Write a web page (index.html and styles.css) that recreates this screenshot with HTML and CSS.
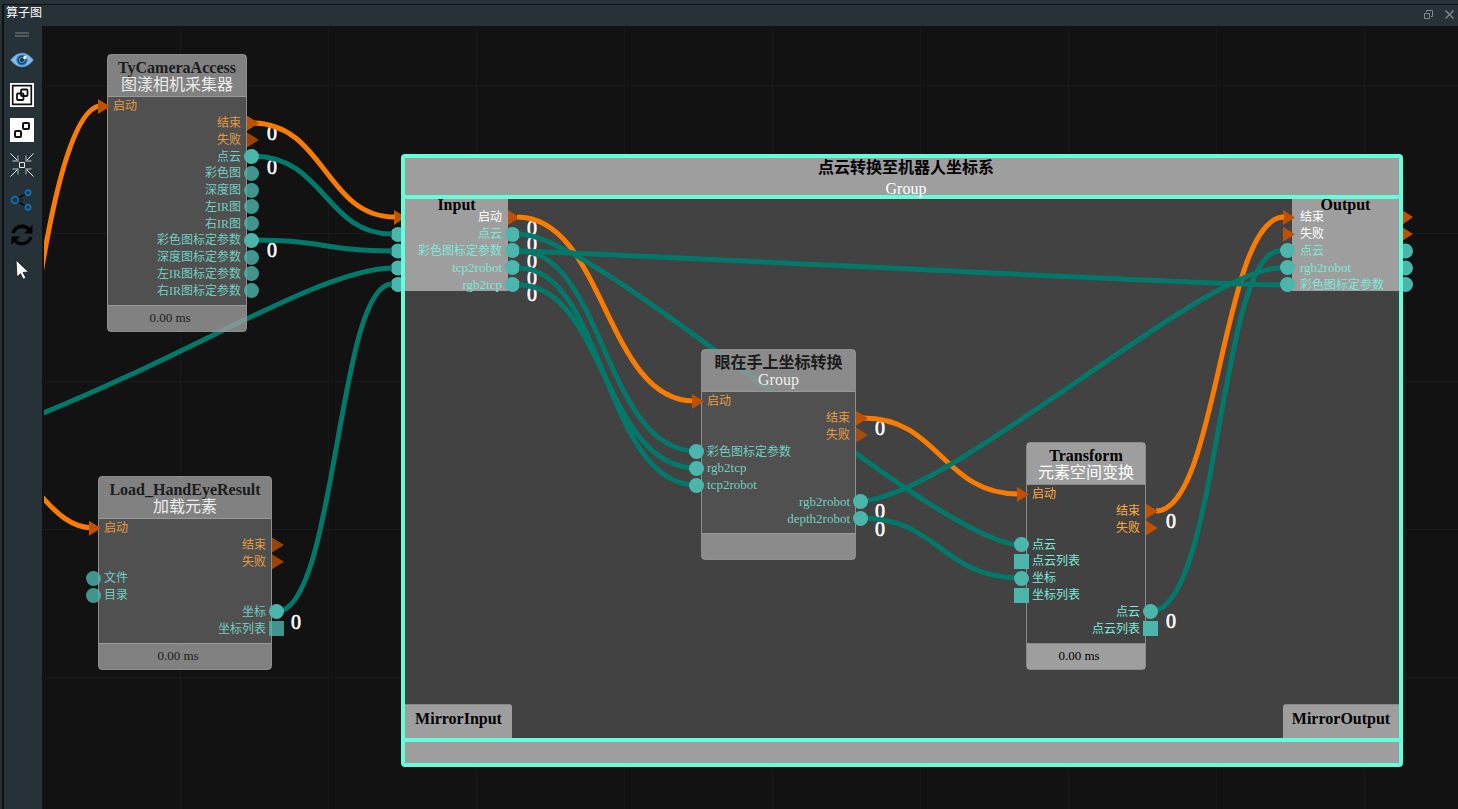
FILE: index.html
```html
<!DOCTYPE html>
<html lang="zh-CN">
<head>
<meta charset="utf-8">
<title>算子图</title>
<link rel="stylesheet" href="styles.css">
</head>
<body>
<div class="dock">
  <header class="titlebar">
    <h1 class="titlebar-text">算子图</h1>
    <div class="titlebar-actions">
      <button class="win-button" aria-label="浮动"><svg width="11" height="11" viewBox="0 0 11 11" fill="none" stroke="#838b8f"><path d="M3.500 3V1.500H9.500V7.500H8M1.500 4.500H6.500V9.500H1.500Z"/></svg></button>
      <button class="win-button" aria-label="关闭"><svg width="11" height="11" viewBox="0 0 11 11" stroke="#838b8f" stroke-width="1.300"><path d="M1.500 1.500L9.500 9.500M9.500 1.500L1.500 9.500"/></svg></button>
    </div>
  </header>
  <div class="workspace">
    <nav class="toolbar" aria-label="工具栏">
      <div class="handle"></div>
      <button class="tool" aria-label="显示"><svg viewBox="0 0 24 24"><path d="M0.500 12Q6 5 12 5Q18 5 23.500 12Q18 19 12 19Q6 19 0.500 12Z" fill="#86b9e8" stroke="#4a7fae" stroke-width=".6"/><circle cx="12" cy="12" r="5.600" fill="#1c7fca"/><circle cx="12" cy="12" r="3.700" fill="#4a91c8" stroke="#17456d" stroke-width="1.200"/><circle cx="12" cy="12" r="2" fill="#17364f"/><circle cx="15" cy="9.500" r="1.700" fill="#fff"/></svg></button>
      <button class="tool" aria-label="组合"><svg viewBox="0 0 24 24"><path fill="#fff" d="M0 0H24V24H0Z"/><g fill="none" stroke="#111"><path stroke-width="1.700" d="M2.700 2.700H21.300V21.300H2.700Z"/><rect x="7" y="10.500" width="6.500" height="6.500" rx="1" stroke-width="1.800"/><rect x="11" y="6.500" width="6.500" height="6.500" rx="1" stroke-width="1.800"/></g></svg></button>
      <button class="tool" aria-label="拆分"><svg viewBox="0 0 24 24"><path fill="#fff" d="M0 0H24V24H0Z"/><g fill="none" stroke="#111" stroke-width="2"><rect x="5" y="13" width="6" height="6" rx="1"/><rect x="13" y="5" width="6" height="6" rx="1"/></g></svg></button>
      <button class="tool" aria-label="收缩"><svg viewBox="0 0 24 24" fill="none" stroke="#e8eaeb"><path stroke-width="1" d="M9.500 9.500H14.500V14.500H9.500ZM0.500 0.500L8 8M23.500 0.500L16 8M0.500 23.500L8 16M23.500 23.500L16 16"/><path stroke="#8e979b" stroke-width="1.300" d="M8 2.500V8H2.500M16 2.500V8H21.500M8 21.500V16H2.500M16 21.500V16H21.500"/></svg></button>
      <button class="tool" aria-label="连接"><svg viewBox="0 0 24 24" fill="none"><path stroke="#000" stroke-width="1.200" d="M8 10L16 6M8 14L16 18"/><path stroke="#000" stroke-dasharray="1.500 1" d="M9 12H14"/><g stroke="#0d73bd" stroke-width="1.700"><circle cx="5" cy="12" r="3.400"/><circle cx="18" cy="4.700" r="2.600"/><circle cx="18" cy="19.300" r="2.600"/></g></svg></button>
      <button class="tool" aria-label="刷新"><svg viewBox="0 0 24 24"><g fill="none" stroke="#000" stroke-width="3.400"><path d="M3 10Q5.500 3.500 12 3.300Q16.500 3.300 19 6.500"/><path d="M21 14Q18.500 20.500 12 20.700Q7.500 20.700 5 17.500"/></g><path d="M22.500 2V10.500H14ZM1.500 22V13.500H10Z"/></svg></button>
      <button class="tool" aria-label="选择"><svg viewBox="0 0 24 24"><path d="M6 2L18.500 14L13 14.400L16 20L13.200 21.300L10.500 15.700L7 19Z" fill="#fff" stroke="#111" stroke-width=".8"/></svg></button>
    </nav>

    <main class="canvas">
      <svg class="layer" aria-hidden="true">
        <g transform="translate(-44 -28)">
          <g fill="#bf5000"><path d="M394 210L406 217L394 225ZM1402 210L1413 217L1402 225ZM1402 227L1413 234L1402 241Z"/></g>
          <g fill="#4db6ac">
            <circle cx="398" cy="234.500" r="7.500"/><circle cx="398" cy="251" r="7.500"/><circle cx="398" cy="268" r="7.500"/><circle cx="398" cy="284.500" r="7.500"/>
            <circle cx="1405.500" cy="251" r="7.500"/><circle cx="1405.500" cy="268" r="7.500"/><circle cx="1405.500" cy="284.500" r="7.500"/>
          </g>
        </g>
      </svg>

      <section class="group">
        <header class="group-head"><h2 class="title">点云转换至机器人坐标系</h2><p class="subtitle">Group</p></header>
        <div class="group-body">
          <div class="panel-row">
            <div class="panel panel-in">
              <h3 class="title">Input</h3>
              <ul class="rows rows-5">
                <li class="out flow">启动<i class="port arrow"></i></li>
                <li class="out">点云<i class="port"></i></li>
                <li class="out">彩色图标定参数<i class="port"></i></li>
                <li class="out latin">tcp2robot<i class="port"></i></li>
                <li class="out latin">rgb2tcp<i class="port"></i></li>
              </ul>
            </div>
            <div class="panel panel-out">
              <h3 class="title">Output</h3>
              <ul class="rows rows-5">
                <li class="in flow"><i class="port arrow"></i>结束</li>
                <li class="in flow"><i class="port arrow"></i>失败</li>
                <li class="in"><i class="port"></i>点云</li>
                <li class="in latin"><i class="port"></i>rgb2robot</li>
                <li class="in"><i class="port"></i>彩色图标定参数</li>
              </ul>
            </div>
          </div>
          <div class="panel-row">
            <div class="mirror mirror-in"><h3 class="title">MirrorInput</h3></div>
            <div class="mirror mirror-out"><h3 class="title">MirrorOutput</h3></div>
          </div>
        </div>
        <footer class="group-foot"></footer>
      </section>

      <svg class="layer">
        <g transform="translate(-44 -28)">
          <g class="counts">
            <text x="272" y="140">0</text><text x="272" y="174">0</text><text x="272" y="257">0</text>
            <text x="296" y="629">0</text>
            <text x="532" y="235">0</text><text x="532" y="251">0</text><text x="532" y="268">0</text><text x="532" y="285">0</text><text x="532" y="301">0</text>
            <text x="880" y="435">0</text><text x="880" y="518">0</text><text x="880" y="536">0</text>
            <text x="1171" y="528">0</text><text x="1171" y="628">0</text>
          </g>
          <g class="wire wire-flow">
            <path d="M40 280C56 180 76 108 100 106"/>
            <path d="M36 490C58 516 72 527 92 528"/>
            <path d="M252 123C325 123 325 217 395 217"/>
            <path d="M517 217C605 217 605 401 694 401"/>
            <path d="M863 418C940 418 942 494 1019 494"/>
            <path d="M1156 511C1218 511 1222 217 1284 217"/>
          </g>
          <g class="wire wire-data">
            <path d="M252 156C325 156 325 234 392 234"/>
            <path d="M252 240C325 240 325 251 392 251"/>
            <path d="M36 416C200 350 320 270 392 268"/>
            <path d="M276 612C337 612 337 284 392 284"/>
            <path d="M519 234C600 234 936 545 1021 545"/>
            <path d="M519 251C604 253 1200 285 1280 285"/>
            <path d="M519 251C604 251 604 451 696 451"/>
            <path d="M519 268C604 268 604 485 696 485"/>
            <path d="M519 285C604 285 604 468 696 468"/>
            <path d="M860 501C945 501 1202 268 1280 268"/>
            <path d="M860 518C940 518 940 578 1021 578"/>
            <path d="M1151 611C1219 611 1219 251 1280 251"/>
          </g>
        </g>
      </svg>

      <article class="node dim node-camera">
        <header class="node-head"><h2 class="title">TyCameraAccess</h2><p class="subtitle">图漾相机采集器</p></header>
        <div class="node-body"><ul class="rows rows-12">
          <li class="in flow"><i class="port arrow"></i>启动</li>
          <li class="out flow">结束<i class="port arrow"></i></li>
          <li class="out flow">失败<i class="port arrow idle"></i></li>
          <li class="out">点云<i class="port"></i></li>
          <li class="out">彩色图<i class="port idle"></i></li>
          <li class="out">深度图<i class="port idle"></i></li>
          <li class="out">左IR图<i class="port idle"></i></li>
          <li class="out">右IR图<i class="port idle"></i></li>
          <li class="out">彩色图标定参数<i class="port"></i></li>
          <li class="out">深度图标定参数<i class="port idle"></i></li>
          <li class="out">左IR图标定参数<i class="port idle"></i></li>
          <li class="out">右IR图标定参数<i class="port idle"></i></li>
        </ul></div>
        <footer class="node-foot">0.00 ms</footer>
      </article>

      <article class="node dim node-load">
        <header class="node-head"><h2 class="title">Load_HandEyeResult</h2><p class="subtitle">加载元素</p></header>
        <div class="node-body"><ul class="rows rows-7">
          <li class="in flow"><i class="port arrow"></i>启动</li>
          <li class="out flow">结束<i class="port arrow idle"></i></li>
          <li class="out flow">失败<i class="port arrow idle"></i></li>
          <li class="in"><i class="port idle"></i>文件</li>
          <li class="in"><i class="port idle"></i>目录</li>
          <li class="out">坐标<i class="port"></i></li>
          <li class="out">坐标列表<i class="port square idle"></i></li>
        </ul></div>
        <footer class="node-foot">0.00 ms</footer>
      </article>

      <article class="node dim node-eye">
        <header class="node-head"><h2 class="title">眼在手上坐标转换</h2><p class="subtitle">Group</p></header>
        <div class="node-body"><ul class="rows rows-8">
          <li class="in flow"><i class="port arrow"></i>启动</li>
          <li class="out flow">结束<i class="port arrow"></i></li>
          <li class="out flow">失败<i class="port arrow idle"></i></li>
          <li class="in"><i class="port"></i>彩色图标定参数</li>
          <li class="in latin"><i class="port"></i>rgb2tcp</li>
          <li class="in latin"><i class="port"></i>tcp2robot</li>
          <li class="out latin">rgb2robot<i class="port"></i></li>
          <li class="out latin">depth2robot<i class="port"></i></li>
        </ul></div>
        <footer class="node-foot"></footer>
      </article>

      <article class="node node-transform">
        <header class="node-head"><h2 class="title">Transform</h2><p class="subtitle">元素空间变换</p></header>
        <div class="node-body"><ul class="rows rows-9">
          <li class="in flow"><i class="port arrow"></i>启动</li>
          <li class="out flow">结束<i class="port arrow"></i></li>
          <li class="out flow">失败<i class="port arrow"></i></li>
          <li class="in"><i class="port"></i>点云</li>
          <li class="in"><i class="port square"></i>点云列表</li>
          <li class="in"><i class="port"></i>坐标</li>
          <li class="in"><i class="port square"></i>坐标列表</li>
          <li class="out">点云<i class="port"></i></li>
          <li class="out">点云列表<i class="port square"></i></li>
        </ul></div>
        <footer class="node-foot">0.00 ms</footer>
      </article>
    </main>
  </div>
</div>
</body>
</html>
```
FILE: styles.css
```css
* { box-sizing: border-box; }
html, body { height: 100%; }
body {
  margin: 0;
  padding-top: 4px;
  background: #263238;
  font-family: "Liberation Serif", "Noto Sans CJK SC", serif;
  font-size: 12px;
  color: #fff;
  overflow: hidden;
}
h1, h2, h3, p, ul { margin: 0; padding: 0; }
ul { list-style: none; }
button { border: 0; padding: 0; background: none; display: grid; place-items: center; cursor: pointer; }

.dock {
  height: 100%;
  border-top: 1px solid #121212;
  margin-left: 2px;
  border-left: 2px solid #121212;
  display: flex;
  flex-direction: column;
}

.titlebar {
  height: 21px;
  flex: none;
  display: flex;
  justify-content: space-between;
  padding: 0 3px 2px 2px;
}
.titlebar-text { font-size: 12px; font-weight: 400; line-height: 16px; }
.titlebar-actions { display: flex; gap: 10px; align-items: center; }
.win-button { width: 11px; height: 18px; }

.workspace { flex: 1; min-height: 0; display: flex; }
.toolbar {
  width: 38px;
  padding: 6px 0 0;
  display: flex;
  flex-direction: column;
  align-items: center;
  gap: 10px;
}
.toolbar > * { margin-right: 2px; }
.handle { width: 14px; height: 5px; border-top: 2px solid #51595d; border-bottom: 2px solid #51595d; }
.tool { width: 24px; height: 25px; flex: none; }
.tool svg { width: 24px; height: 24px; display: block; }

.canvas {
  flex: 1;
  min-width: 0;
  position: relative;
  overflow: hidden;
  border-top: 2px solid #121212;
  border-left: 2px solid #121212;
  background-color: #121212;
  background-image:
    linear-gradient(90deg, #191919 1px, transparent 1px),
    linear-gradient(#191919 1px, transparent 1px);
  background-size: 148px 148px;
  background-position: 136px 57px;
}
.layer { position: absolute; inset: 0; width: 100%; height: 100%; pointer-events: none; }
.wire { fill: none; stroke-width: 5; }
.wire-flow { stroke: #f97c00; }
.wire-data { stroke: #00796b; }
.counts { font: 20px "Liberation Serif", serif; fill: #fff; stroke: #fff; stroke-width: .6; text-anchor: middle; }

.title { font-size: 16px; font-weight: 700; color: #000; white-space: nowrap; }
.subtitle { font-size: 16px; }

/* Port rows */
.rows { display: grid; grid-auto-rows: 1fr; color: #7ce9da; }
.rows-5 { height: 84px; }
.rows-7 { height: 117px; }
.rows-8 { height: 134px; }
.rows-9 { height: 151px; }
.rows-12 { height: 201px; }
.rows li { display: flex; align-items: center; gap: 3px; line-height: 14px; white-space: nowrap; }
.rows .in { margin-left: -13px; }
.rows .out { margin-right: -13px; justify-content: flex-end; }
.rows .flow { color: #ffab40; }
.rows .latin { font-size: 13px; }
.port { flex: none; width: 15px; height: 15px; border-radius: 50%; background: #4db6ac; }
.square { border-radius: 0; }
.arrow { border-radius: 0; background: #bf5000; clip-path: polygon(3px 0, 15px 50%, 3px 100%); }
.idle { opacity: .8; }

/* Nodes */
.node { position: absolute; border: 1px solid #8b8b8b; border-radius: 4px; }
.node-head {
  height: 42px;
  padding-top: 4px;
  text-align: center;
  background: #9e9e9e;
  border-bottom: 1px solid #8b8b8b;
}
.node-head .title, .node-head .subtitle { line-height: 17px; }
.node-body { padding: 1px 0 6px; }
.node-foot {
  height: 26px;
  padding-right: 14px;
  text-align: center;
  font-size: 13px;
  line-height: 24px;
  color: #000;
  background: #9e9e9e;
  border-top: 1px solid #8b8b8b;
}
.dim { border-color: #8e8e8e; }
.dim .node-head, .dim .node-foot { background: rgba(158, 158, 158, .8); border-color: #999; }
.dim .node-body { background: #505050; }
.dim .title, .dim .node-foot { color: #1c1c1c; }
.dim .subtitle { color: #ececec; }
.dim .rows { color: #71cec2; }
.dim .rows .flow { color: #e59b40; }

.node-camera { left: 63px; top: 26px; width: 140px; }
.node-load { left: 54px; top: 448px; width: 174px; }
.node-eye { left: 657px; top: 321px; width: 155px; }
.node-transform { left: 982px; top: 414px; width: 120px; }

/* Expanded group */
.group {
  position: absolute;
  left: 357px;
  top: 126px;
  width: 1002px;
  height: 613px;
  display: flex;
  flex-direction: column;
  border: 4px solid #64ffda;
  border-radius: 4px;
  background: #424242;
}
.group-head { height: 41px; background: #9e9e9e; border-bottom: 4px solid #64ffda; text-align: center; padding-left: 8px; }
.group-head .title { line-height: 20px; }
.group-head .subtitle { line-height: 22px; }
.group-body { flex: 1; display: flex; flex-direction: column; justify-content: space-between; }
.group-foot { height: 25px; background: #9e9e9e; border-top: 4px solid #64ffda; }
.panel-row { display: flex; justify-content: space-between; align-items: flex-start; }
.panel { height: 92px; background: #9e9e9e; text-align: center; }
.panel .title { line-height: 12px; height: 10px; }
.panel .rows .flow { color: #fff; }
.panel-in { width: 103px; }
.panel-out { width: 107px; }
.panel .rows .out, .panel .rows .in { margin-inline: -12px; }
.panel .rows .in { gap: 5px; }
.mirror { height: 34px; background: #9e9e9e; text-align: center; border-top: 1px solid #888; }
.mirror .title { line-height: 28px; }
.mirror-in { width: 107px; border-top-right-radius: 3px; }
.mirror-out { width: 116px; border-top-left-radius: 3px; }
```
